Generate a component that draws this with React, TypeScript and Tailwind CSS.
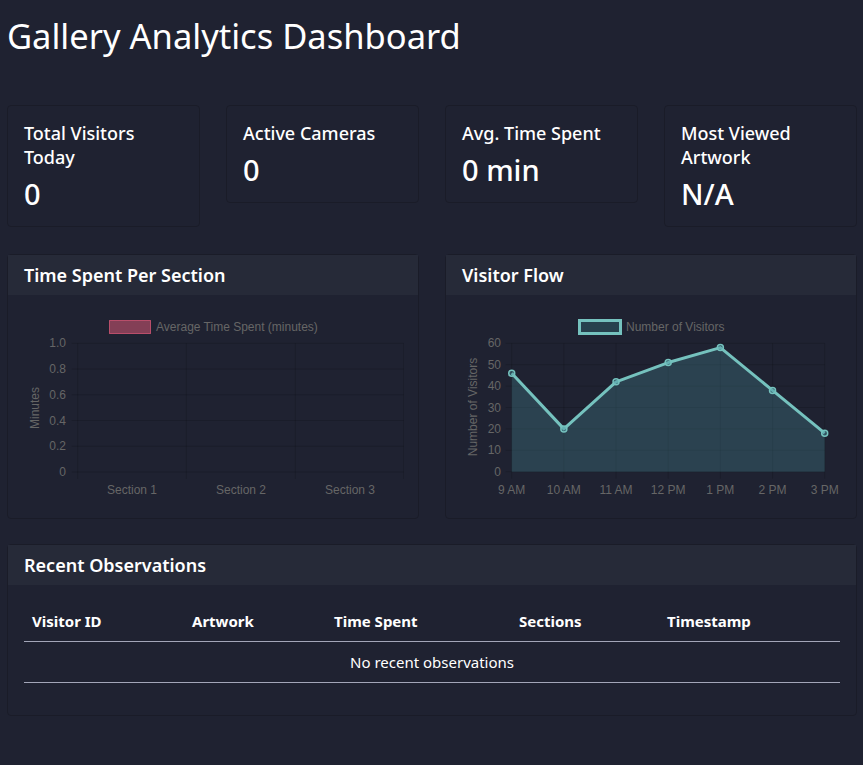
const stats = [
  { label: "Total Visitors Today", value: "0" },
  { label: "Active Cameras", value: "0" },
  { label: "Avg. Time Spent", value: "0 min" },
  { label: "Most Viewed Artwork", value: "N/A" },
];

const visitors = [46, 20, 42, 51, 58, 38, 18];
const hours = ["9 AM", "10 AM", "11 AM", "12 PM", "1 PM", "2 PM", "3 PM"];

const chartFont = { fontFamily: '"Liberation Sans", Arial, sans-serif' };

function StatCard({ label, value }: { label: string; value: string }) {
  return (
    <div className="rounded border border-[#1a1c28] px-4 pt-[15px] pb-4">
      <p className="text-[18px] leading-6 font-medium text-white">{label}</p>
      <p className="mt-2 text-[29px] leading-[33px] font-medium text-white">{value}</p>
    </div>
  );
}

function Panel({ title, children }: { title: string; children: React.ReactNode }) {
  return (
    <div className="rounded border border-[#1a1c28]">
      <div className="flex h-10 items-center bg-[#262a38] px-4">
        <h2 className="text-[18px] font-semibold text-white">{title}</h2>
      </div>
      <div className="p-4">{children}</div>
    </div>
  );
}

function SectionChart() {
  // svg origin sits at page (23, 312)
  const left = 53.7;
  const right = 379.7;
  const top = 32.3;
  const bottom = 161;
  const ticks = ["1.0", "0.8", "0.6", "0.4", "0.2", "0"];
  const cols = [left, 162.3, 271.3, right];
  return (
    <svg width="380" height="191" style={chartFont} className="block">
      <rect x="85.5" y="9.5" width="41" height="13" fill="rgba(255,99,132,0.45)" stroke="rgba(255,99,132,0.6)" />
      <text x="132" y="20" fontSize="12" fill="#666">Average Time Spent (minutes)</text>
      {ticks.map((t, i) => {
        const y = top + ((bottom - top) / 5) * i;
        return (
          <g key={t}>
            <line x1={left - 6} x2={right} y1={y} y2={y} stroke="rgba(0,0,0,0.14)" />
            <text x="42" y={y + 4} fontSize="12" fill="#666" textAnchor="end">{t}</text>
          </g>
        );
      })}
      {cols.map((x) => (
        <line key={x} x1={x} x2={x} y1={top} y2={bottom + 7} stroke="rgba(0,0,0,0.14)" />
      ))}
      {["Section 1", "Section 2", "Section 3"].map((s, i) => (
        <text key={s} x={108 + 109 * i} y="183" fontSize="12" fill="#666" textAnchor="middle">{s}</text>
      ))}
      <text transform="translate(15 97) rotate(-90)" fontSize="12" fill="#666" textAnchor="middle">Minutes</text>
    </svg>
  );
}

function FlowChart() {
  // svg origin sits at page (461, 312)
  const left = 49.7;
  const right = 362.7;
  const top = 32.3;
  const bottom = 160.7;
  const step = (right - left) / 6;
  const pts = visitors.map((v, i) => [left + step * i, bottom - (v / 60) * (bottom - top)]);
  const line = pts.map((p, i) => `${i ? "L" : "M"}${p[0]} ${p[1]}`).join(" ");
  const area = `${line} L${right} ${bottom} L${left} ${bottom} Z`;
  return (
    <svg width="380" height="191" style={chartFont} className="block">
      <rect x="117.5" y="9.5" width="41" height="13" fill="rgba(75,192,192,0.2)" stroke="#75c2be" strokeWidth="3" />
      <text x="164" y="20" fontSize="12" fill="#666">Number of Visitors</text>
      {[60, 50, 40, 30, 20, 10, 0].map((t, i) => {
        const y = top + ((bottom - top) / 6) * i;
        return (
          <g key={t}>
            <line x1={left - 6} x2={right} y1={y} y2={y} stroke="rgba(0,0,0,0.14)" />
            <text x="39" y={y + 4} fontSize="12" fill="#666" textAnchor="end">{t}</text>
          </g>
        );
      })}
      {hours.map((h, i) => (
        <line key={h} x1={left + step * i} x2={left + step * i} y1={top} y2={bottom + 7} stroke="rgba(0,0,0,0.14)" />
      ))}
      <path d={area} fill="rgba(75,150,160,0.28)" />
      <path d={line} fill="none" stroke="#75c2be" strokeWidth="3" strokeLinejoin="round" />
      {pts.map((p, i) => (
        <circle key={i} cx={p[0]} cy={p[1]} r="3" fill="rgba(75,150,160,0.4)" stroke="#75c2be" strokeWidth="1.5" />
      ))}
      {hours.map((h, i) => (
        <text key={h} x={left + step * i} y="183" fontSize="12" fill="#666" textAnchor="middle">{h}</text>
      ))}
      <text transform="translate(15 96) rotate(-90)" fontSize="12" fill="#666" textAnchor="middle">Number of Visitors</text>
    </svg>
  );
}

export default function App() {
  return (
    <div
      className="min-h-screen bg-[#1f2231] pr-[6px] pl-[7px] pt-[14px] pb-12 text-white"
      style={{ fontFamily: '"Noto Sans", "Open Sans", sans-serif' }}
    >
      <h1 className="mb-[47px] text-[34.5px] leading-[44px] font-normal">Gallery Analytics Dashboard</h1>

      <div className="grid grid-cols-4 items-start gap-[26px]">
        {stats.map((s) => (
          <StatCard key={s.label} {...s} />
        ))}
      </div>

      <div className="mt-[27px] grid grid-cols-2 gap-[26px]">
        <Panel title="Time Spent Per Section">
          <SectionChart />
        </Panel>
        <Panel title="Visitor Flow">
          <FlowChart />
        </Panel>
      </div>

      <div className="mt-[25px]">
        <Panel title="Recent Observations">
          <table className="mb-4 w-full border-collapse text-[15px] leading-6">
            <thead>
              <tr className="border-b border-[#a3a6b8]">
                <th className="w-[160px] px-2 py-2 text-left font-bold">Visitor ID</th>
                <th className="w-[142px] px-2 py-2 text-left font-bold">Artwork</th>
                <th className="w-[185px] px-2 py-2 text-left font-bold">Time Spent</th>
                <th className="w-[148px] px-2 py-2 text-left font-bold">Sections</th>
                <th className="px-2 py-2 text-left font-bold">Timestamp</th>
              </tr>
            </thead>
            <tbody>
              <tr className="border-b border-[#a3a6b8]">
                <td colSpan={5} className="px-2 py-2 text-center">No recent observations</td>
              </tr>
            </tbody>
          </table>
        </Panel>
      </div>
    </div>
  );
}
